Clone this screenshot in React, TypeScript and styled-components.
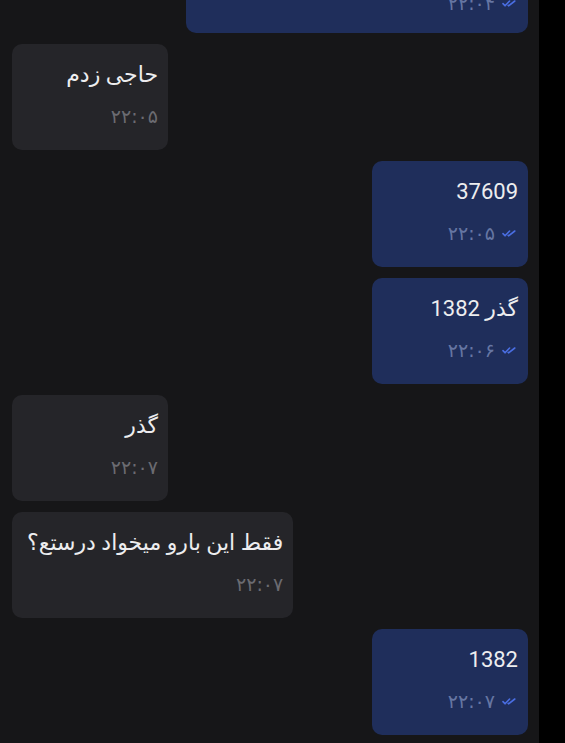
import React from "react";
import styled, { createGlobalStyle } from "styled-components";

const GlobalStyle = createGlobalStyle`
  html, body { margin: 0; padding: 0; background: #000; }
  * { box-sizing: border-box; }
`;

const Screen = styled.div`
  display: flex;
  width: 565px;
  height: 743px;
  overflow: hidden;
  background: #000;
`;

const ChatArea = styled.div`
  flex: 0 0 539px;
  height: 100%;
  background: #161618;
  overflow: hidden;
`;

const Strip = styled.div`
  flex: 1;
  background: #000;
`;

const MessageList = styled.div`
  display: flex;
  flex-direction: column;
  gap: 11px;
  padding: 0 11px 0 12px;
  margin-top: -73px;
`;

const Row = styled.div<{ $out?: boolean }>`
  display: flex;
  justify-content: ${(p) => (p.$out ? "flex-end" : "flex-start")};
`;

const Bubble = styled.div<{ $out?: boolean }>`
  direction: rtl;
  min-width: 156px;
  height: 106px;
  padding: 16px 10px 0 15px;
  border-radius: 10px;
  background: ${(p) => (p.$out ? "#1f2e5b" : "#252529")};
  font-family: Roboto, "DejaVu Sans", sans-serif;
  display: flex;
  flex-direction: column;
  gap: 14px;
`;

const TopBubble = styled(Bubble)`
  width: 342px;
  gap: 18px;
`;

const Text = styled.div`
  color: #ededef;
  font-size: 22px;
  line-height: 30px;
  white-space: nowrap;
`;

const Meta = styled.div<{ $out?: boolean }>`
  display: flex;
  align-items: center;
  gap: 7px;
  color: ${(p) => (p.$out ? "#6676a3" : "#6b6b71")};
  font-size: 19px;
  letter-spacing: 0.6px;
  line-height: 24px;
  font-family: "DejaVu Sans", sans-serif;
`;

const CheckIcon = styled.svg`
  margin-right: 2px;
  flex: 0 0 auto;
`;

const Check = () => (
  <CheckIcon width="14" height="7" viewBox="0 0 14 7" fill="none">
    <path d="M1 3.6 L3 5.8 L7.6 1" stroke="#4a6ee2" strokeWidth="1.6" strokeLinecap="round" strokeLinejoin="round" />
    <path d="M6.2 5.4 L6.6 5.8 L12.8 1" stroke="#4a6ee2" strokeWidth="1.6" strokeLinecap="round" strokeLinejoin="round" />
  </CheckIcon>
);

type Msg = { out: boolean; text: string; time: string; top?: boolean };

const messages: Msg[] = [
  { out: true, text: "", time: "۲۲:۰۴", top: true },
  { out: false, text: "حاجی زدم", time: "۲۲:۰۵" },
  { out: true, text: "37609", time: "۲۲:۰۵" },
  { out: true, text: "گذر 1382", time: "۲۲:۰۶" },
  { out: false, text: "گذر", time: "۲۲:۰۷" },
  { out: false, text: "فقط این بارو میخواد درستع؟", time: "۲۲:۰۷" },
  { out: true, text: "1382", time: "۲۲:۰۷" },
];

export default function App() {
  return (
    <>
      <GlobalStyle />
      <Screen>
        <ChatArea>
          <MessageList>
            {messages.map((m, i) => {
              const B = m.top ? TopBubble : Bubble;
              return (
                <Row key={i} $out={m.out}>
                  <B $out={m.out}>
                    <Text>{m.text || "\u00a0"}</Text>
                    <Meta $out={m.out}>
                      {m.out && <Check />}
                      <span>{m.time}</span>
                    </Meta>
                  </B>
                </Row>
              );
            })}
          </MessageList>
        </ChatArea>
        <Strip />
      </Screen>
    </>
  );
}
